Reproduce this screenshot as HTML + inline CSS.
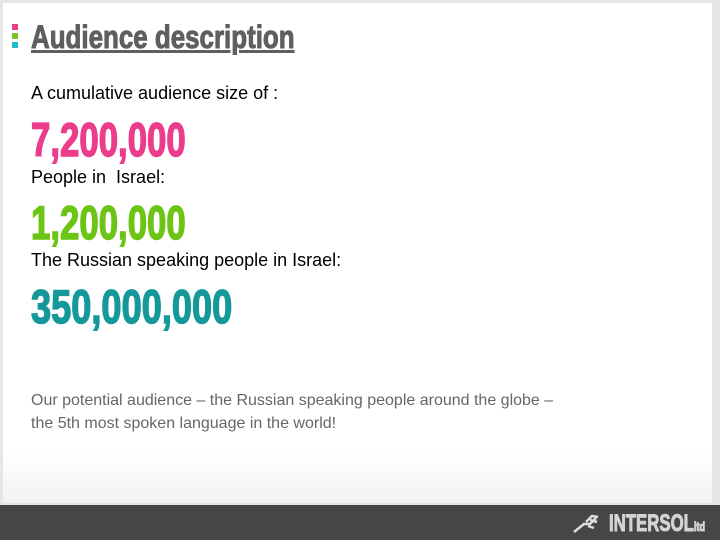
<!DOCTYPE html>
<html><head><meta charset="utf-8"><style>
body{margin:0;width:720px;height:540px;background:#e6e6e6;position:relative;overflow:hidden;font-family:"Liberation Sans",Arial,sans-serif}
.panel{position:absolute;left:3px;top:3px;width:709px;height:500px;background:linear-gradient(#fff 90%,#f2f2f2)}
.bar{position:absolute;left:0;top:505px;width:720px;height:35px;background:#464646}
.c{position:absolute;font-weight:bold;transform-origin:0 0;white-space:nowrap;line-height:1}
.n{-webkit-text-stroke:1.5px currentColor}
.t{position:absolute;left:31px;font-size:18px;color:#000;white-space:nowrap}
.sq{position:absolute;left:12px;width:6px;height:6px}
</style></head><body>
<div class="panel"></div>
<div class="sq" style="top:24px;background:#ec3c8c"></div>
<div class="sq" style="top:33px;background:#7cc420"></div>
<div class="sq" style="top:42px;background:#1cbcc8"></div>
<div class="c n" style="left:31px;top:21px;font-size:32px;color:#5f5f5f;text-decoration:underline;transform:scaleX(0.81);-webkit-text-stroke:1px #5f5f5f">Audience description</div>
<div class="t" style="top:83px">A cumulative audience size of :</div>
<div class="c n" style="left:31px;top:116px;font-size:47px;color:#ec3c8c;transform:scaleX(0.74)">7,200,000</div>
<div class="t" style="top:167px">People in &nbsp;Israel:</div>
<div class="c n" style="left:31px;top:199px;font-size:47px;color:#6cc414;transform:scaleX(0.74)">1,200,000</div>
<div class="t" style="top:250px">The Russian speaking people in Israel:</div>
<div class="c n" style="left:31px;top:283px;font-size:47px;color:#14989a;transform:scaleX(0.77)">350,000,000</div>
<div class="t" style="top:389px;font-size:16px;color:#666;line-height:23px">Our potential audience – the Russian speaking people around the globe –<br>the 5th most spoken language in the world!</div>
<div class="bar"></div>
<svg style="position:absolute;left:572px;top:512px" width="32" height="22" viewBox="0 0 32 22"><path d="M2 20 L12 12 L18 12 L24 6 M14 10 L20 4 L26 5 M16 14 L22 16 M18 8 L25 10" stroke="#ddd" stroke-width="2.5" fill="none"/></svg>
<div class="c n" style="left:609px;top:512px;font-size:24px;color:#d4d4d4;transform:scaleX(0.7);-webkit-text-stroke:1px #d4d4d4">INTERSOL<span style="font-size:13px">ltd</span></div>
</body></html>
